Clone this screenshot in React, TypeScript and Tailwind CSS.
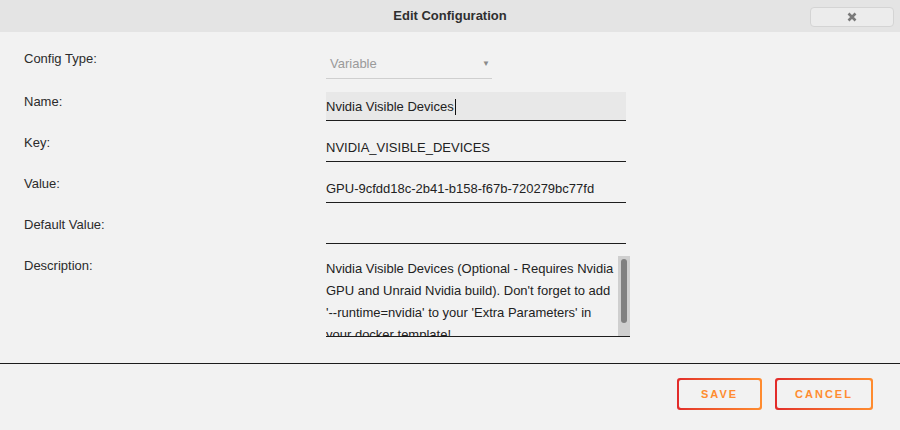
import React from "react";

const rows = [
  { label: "Name:", value: "Nvidia Visible Devices", active: true },
  { label: "Key:", value: "NVIDIA_VISIBLE_DEVICES" },
  { label: "Value:", value: "GPU-9cfdd18c-2b41-b158-f67b-720279bc77fd" },
  { label: "Default Value:", value: "" },
];

const description =
  "Nvidia Visible Devices (Optional - Requires Nvidia GPU and Unraid Nvidia build). Don't forget to add '--runtime=nvidia' to your 'Extra Parameters' in your docker template!";

function GradientButton({ label, width }: { label: string; width: string }) {
  return (
    <div className={`rounded-[3px] bg-gradient-to-r from-[#e22a2a] to-[#ff8c2f] p-[2px] ${width}`}>
      <div className="flex h-[28px] items-center justify-center rounded-[2px] bg-[#f2f2f2] text-[11px] font-bold tracking-[2px] text-[#ff8c2f]">
        {label}
      </div>
    </div>
  );
}

export default function App() {
  return (
    <div className="flex h-[430px] w-[900px] flex-col bg-[#f2f2f2] font-['Liberation_Sans',sans-serif] text-[13px] text-[#2b2b2b]">
      {/* header */}
      <div className="relative flex h-[32px] items-center justify-center bg-[#e4e4e4]">
        <span className="font-bold text-[#2f2f2f]">Edit Configuration</span>
        <button className="absolute right-[6px] top-[7px] flex h-[20px] w-[84px] items-center justify-center rounded-[4px] border border-[#d4d4d4] bg-[#ececec]">
          <svg width="10" height="10" viewBox="0 0 10 10">
            <path d="M1.5 1.5 L8.5 8.5 M8.5 1.5 L1.5 8.5" stroke="#7a7a7a" strokeWidth="2.6" strokeLinecap="butt" />
          </svg>
        </button>
      </div>

      {/* body */}
      <div className="flex flex-col gap-[12px] px-6 pb-[26px] pt-[18px]">
        <div className="flex">
          <div className="w-[302px] pt-[1px] leading-[16px]">Config Type:</div>
          <div className="flex h-[29px] w-[166px] items-center justify-between border-b border-[#cfcfcf] pl-[4px] pr-[2px] text-[#9a9a9a]">
            <span>Variable</span>
            <span className="text-[8px] text-[#8a8a8a]">▼</span>
          </div>
        </div>

        {rows.map((r, i) => (
          <div key={r.label} className={`flex ${i === 0 ? "mt-[1px]" : ""}`}>
            <div className="w-[302px] pt-[2px] leading-[16px]">{r.label}</div>
            <div
              className={`flex h-[29px] w-[300px] items-center border-b border-[#1e1e1e] pt-[2px] text-[#222] ${
                r.active ? "bg-[#e8e8e8]" : ""
              }`}
            >
              {r.value}
              {r.active && <span className="ml-[1px] h-[16px] w-[1px] bg-[#111]" />}
            </div>
          </div>
        ))}

        <div className="flex">
          <div className="w-[302px] pt-[2px] leading-[16px]">Description:</div>
          <div className="flex h-[81px] w-[304px] border-b border-[#1e1e1e]">
            <div className="w-[292px] overflow-hidden pt-[2px] leading-[22px] text-[#222]">{description}</div>
            <div className="ml-auto flex w-[12px] justify-center bg-[#cfcfcf] pt-[3px]">
              <div className="h-[64px] w-[6px] rounded-full bg-[#808080]" />
            </div>
          </div>
        </div>
      </div>

      {/* footer */}
      <div className="flex justify-end gap-[13px] border-t border-[#1c1c1c] pr-[27px] pt-[14px]">
        <GradientButton label="SAVE" width="w-[85px]" />
        <GradientButton label="CANCEL" width="w-[98px]" />
      </div>
    </div>
  );
}
